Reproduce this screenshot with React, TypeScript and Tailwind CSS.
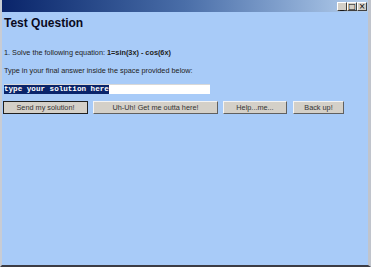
import React from 'react';

const buttons = ['Send my solution!', 'Uh-Uh! Get me outta here!', 'Help...me...', 'Back up!'];
const widths = ['w-[85px]', 'w-[125px]', 'w-[64px]', 'w-[51px]'];
const gaps = ['', 'ml-[5px]', 'ml-[5px]', 'ml-[6px]'];

export default function App() {
  return (
    <div className="w-[371px] h-[267px] flex flex-col bg-[#a8cbf8] border-l-2 border-l-[#c8ccd4] border-r-[3px] border-r-[#c0c4cc] border-b-2 border-b-[#3c3c44] overflow-hidden">
      {/* Title bar */}
      <div className="h-[12px] flex items-center justify-end pr-[1px] bg-gradient-to-r from-[#0a246a] via-[#4a6ea8] to-[#b6d0ee]">
        <div className="flex">
          {['_', '□', '×'].map((g) => (
            <div
              key={g}
              className="w-[10px] h-[9px] bg-[#d4d0c8] border border-t-white border-l-white border-b-[#404040] border-r-[#404040] text-[8px] leading-[7px] text-black text-center font-['DejaVu_Sans',sans-serif]"
            >
              {g}
            </div>
          ))}
        </div>
      </div>

      {/* Content */}
      <div className="flex flex-col px-[2px] font-['Liberation_Sans',Arial,sans-serif] text-black">
        <h1 className="mt-[4px] text-[12px] leading-[14px] font-bold text-[#0a0a1e]">
          Test Question
        </h1>

        <p className="mt-[18px] text-[7.3px] leading-[9px] text-[#222]">
          1. Solve the following equation: <span className="font-bold">1=sin(3x) - cos(6x)</span>
        </p>

        <p className="mt-[9px] text-[7.3px] leading-[9px] text-[#222]">
          Type in your final answer inside the space provided below:
        </p>

        <div className="mt-[9px] w-[206px] h-[10px] bg-white flex items-center border-t border-t-[#d8d8d8]">
          <span className="bg-[#0a246a] text-white text-[7.6px] leading-[9px] font-bold font-['Liberation_Mono',monospace]">
            type your solution here
          </span>
        </div>

        <div className="mt-[7px] ml-[-1px] flex">
          {buttons.map((b, i) => (
            <button
              key={b}
              className={`${widths[i]} ${gaps[i]} h-[13px] bg-[#d4d0c8] text-[7.3px] leading-[11px] text-[#333] border ${
                i === 0
                  ? 'border-[#202020]'
                  : 'border-t-[#f4f4f4] border-l-[#f4f4f4] border-b-[#606060] border-r-[#606060]'
              }`}
            >
              {b}
            </button>
          ))}
        </div>
      </div>
    </div>
  );
}
